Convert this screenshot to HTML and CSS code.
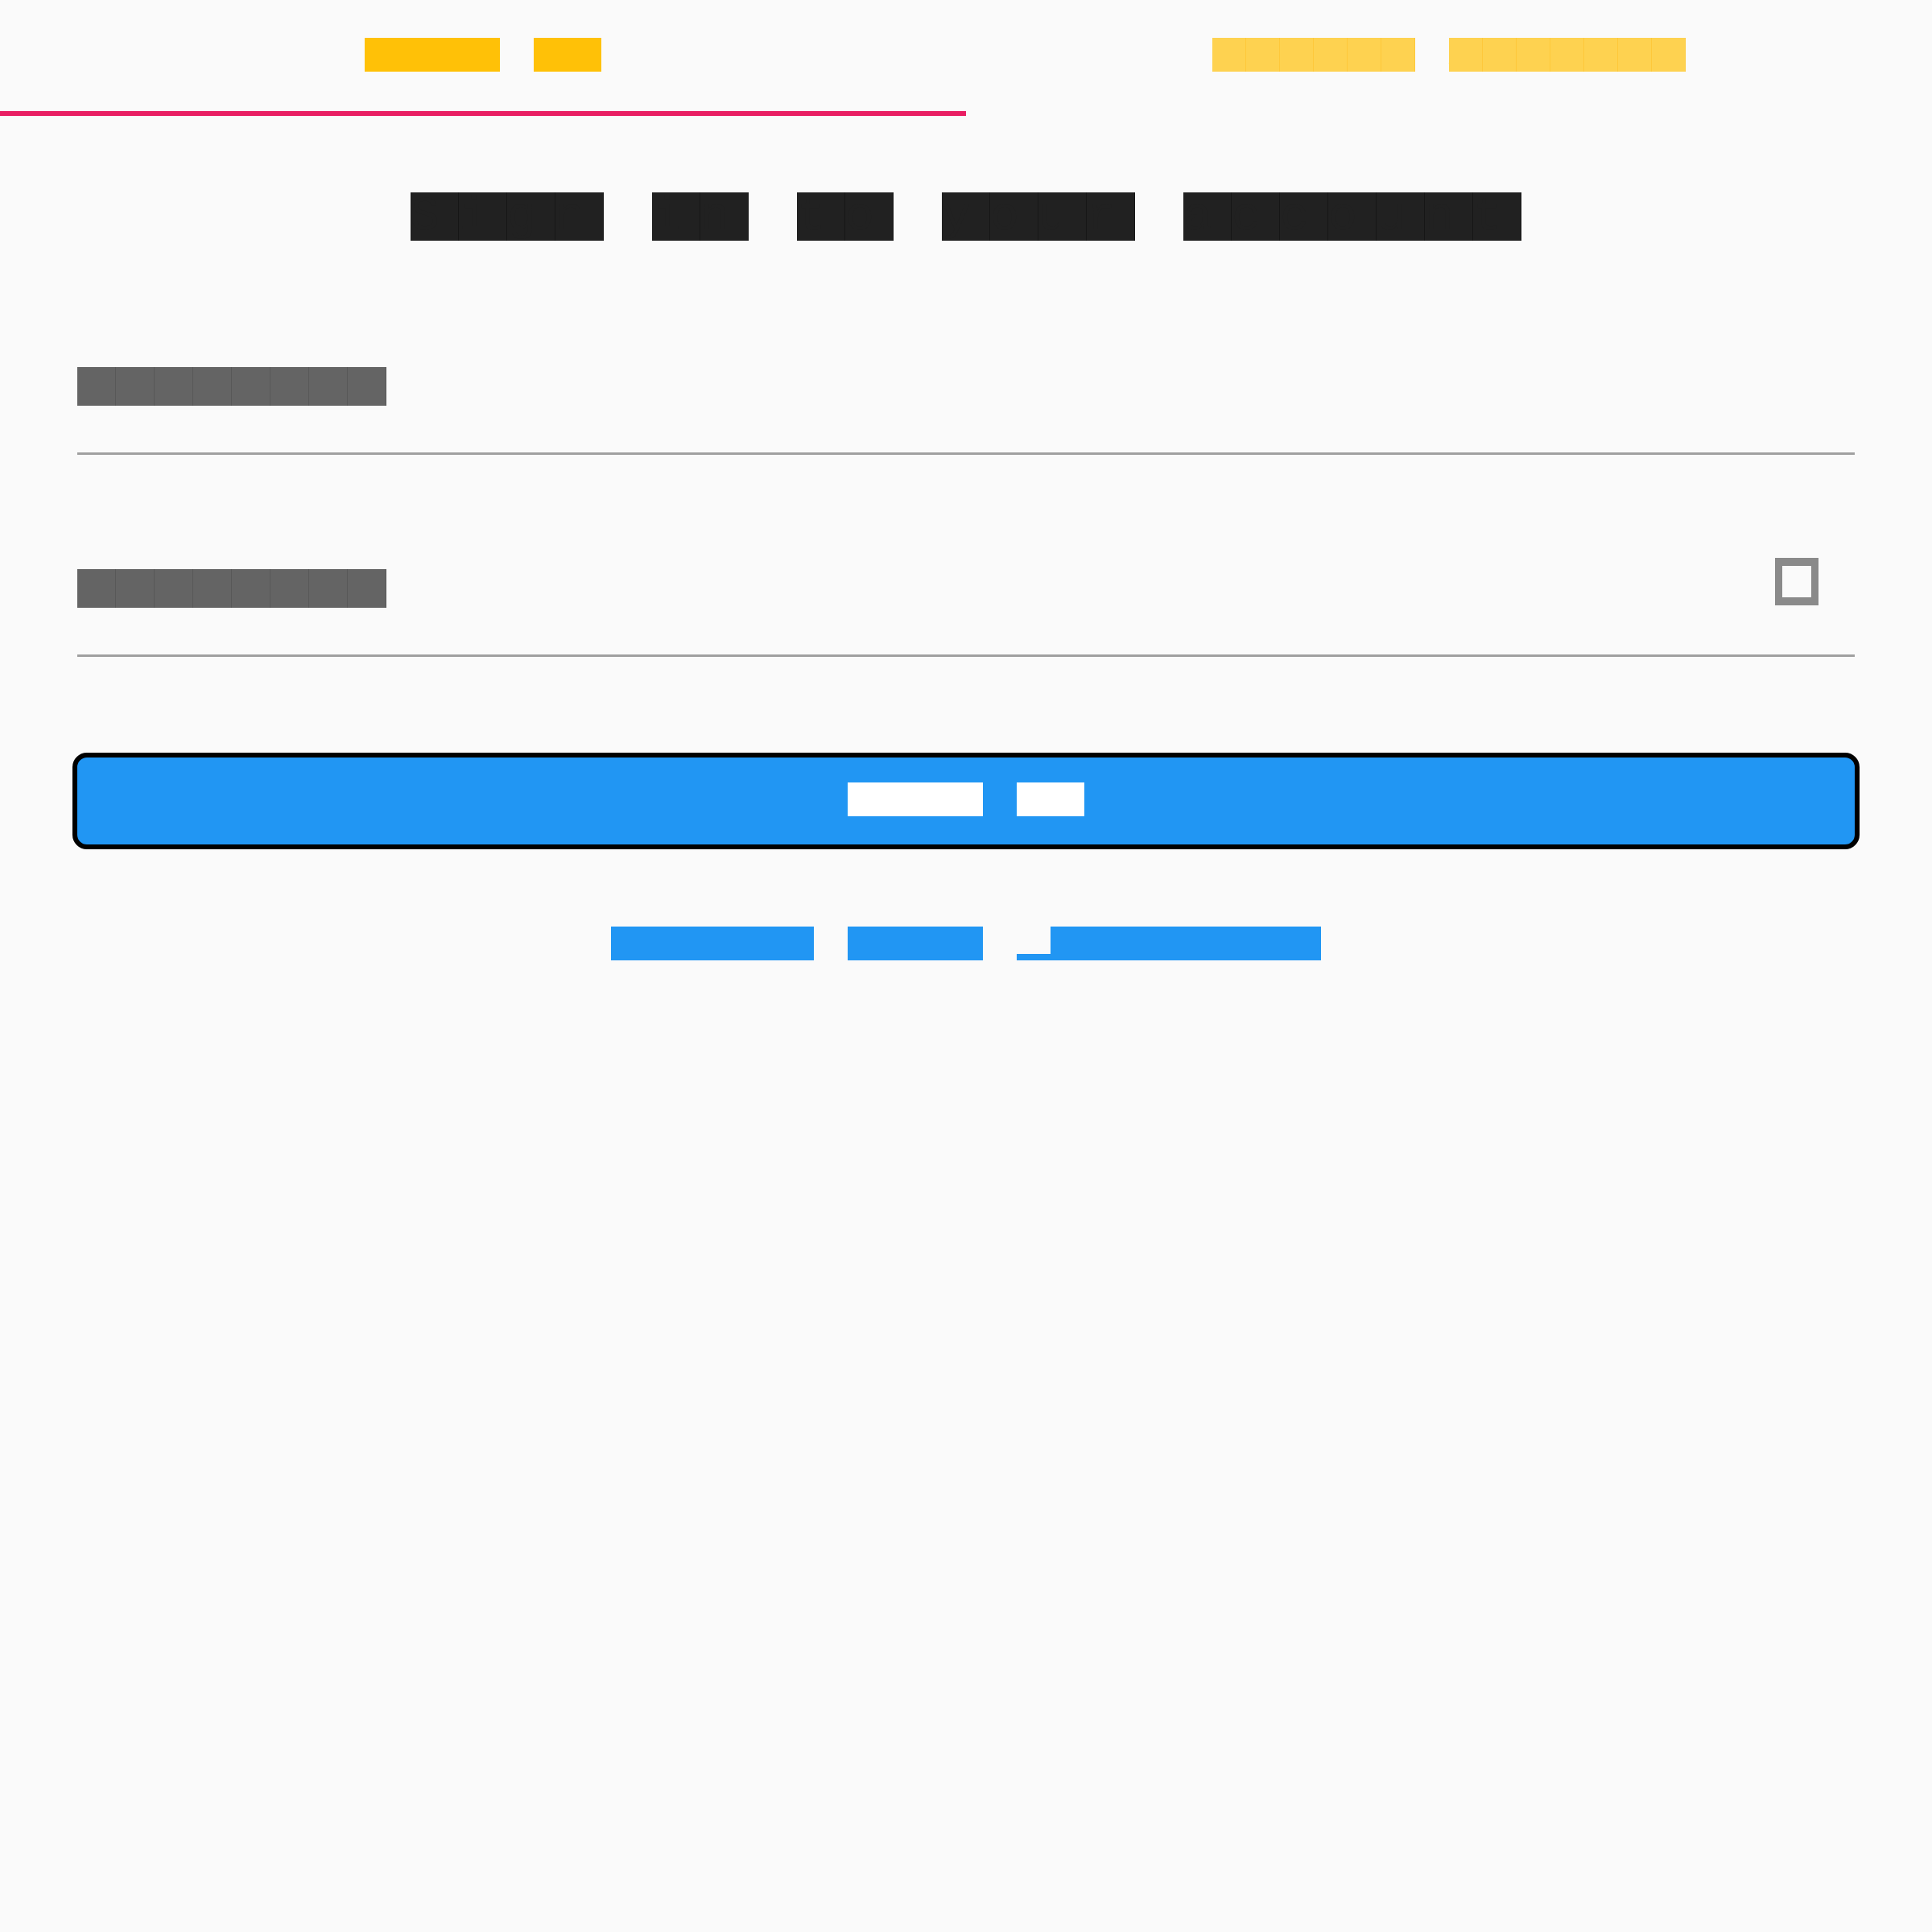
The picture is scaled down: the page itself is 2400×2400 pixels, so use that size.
FILE: index.html
```html
<!DOCTYPE html>
<html lang="en">
<head>
<meta charset="utf-8">
<title>Sign In</title>
<link rel="stylesheet" href="styles.css">
</head>
<body>
<div class="tabs">
  <div class="tab tab-active"><div class="tx t42 amber"><span class="w">Sign</span> <span class="w">In</span></div></div>
  <div class="tab"><div class="tx t42 amber-dim"><span class="w">Create</span> <span class="w">Account</span></div></div>
</div>

<div class="title tx t60 dark"><span class="w">Sign</span> <span class="w">in</span> <span class="w">to</span> <span class="w">your</span> <span class="w">account</span></div>

<div class="form">
  <div class="field field-first">
    <div class="row">
      <div class="tx t48 grey"><span class="w">Username</span></div>
    </div>
    <div class="underline"></div>
  </div>
  <div class="field field-second">
    <div class="row">
      <div class="tx t48 grey"><span class="w">Password</span></div>
      <div class="icon" aria-label="toggle visibility"></div>
    </div>
    <div class="underline"></div>
  </div>

  <div class="button">
    <div class="tx t42 white"><span class="w">Sign</span> <span class="w">In</span></div>
  </div>

  <div class="link tx t42 blue"><span class="w">Forgot</span> <span class="w">your</span> <span class="d">p</span><span class="w">assword?</span></div>
</div>
</body>
</html>
```

FILE: styles.css
```css
html, body {
  margin: 0;
  padding: 0;
  background: #fafafa;
}

body {
  width: 2400px;
  height: 2400px;
  font-family: "Liberation Mono", monospace;
}

.tx {
  font-family: "Liberation Mono", monospace;
  letter-spacing: 0.4em;
  line-height: 1;
  white-space: nowrap;
  height: 1em;
}

.t42 { font-size: 42px; }
.t48 { font-size: 48px; }
.t60 { font-size: 60px; }

.w, .d {
  display: inline-block;
  vertical-align: top;
  height: 1em;
  line-height: 1;
}

.w {
  background-color: var(--c);
  color: var(--c);
  background-image: repeating-linear-gradient(90deg,
    transparent 0, transparent calc(1em - 1px),
    var(--l) calc(1em - 1px), var(--l) 1em);
}

.d {
  color: transparent;
  background-image: linear-gradient(to bottom,
    transparent 0, transparent 0.81em,
    var(--c) 0.81em, var(--c) 1em);
}

.amber { --c: #ffc107; --l: #ffc107; }
.amber-dim { --c: #fed250; --l: #fec83a; }
.dark { --c: #212121; --l: #161616; }
.grey { --c: #646464; --l: #585858; }
.white { --c: #ffffff; --l: #ffffff; }
.blue { --c: #2196f3; --l: #2196f3; }

.tabs {
  display: flex;
  height: 144px;
}

.tab {
  flex: 1;
  box-sizing: border-box;
  height: 144px;
  padding-top: 47px;
  text-align: center;
}

.tab .tx {
  display: inline-block;
}

.tab-active {
  border-bottom: 6px solid #e91e63;
}

.title {
  margin-top: 95px;
  text-align: center;
}

.form {
  padding: 0 96px;
}

.field-first {
  margin-top: 157px;
}

.field-second {
  margin-top: 142px;
}

.row {
  display: flex;
  align-items: flex-start;
  height: 48px;
}

.underline {
  margin-top: 58px;
  height: 3px;
  background: #a0a0a0;
}

.icon {
  box-sizing: border-box;
  width: 54px;
  height: 59px;
  margin-left: auto;
  margin-right: 45px;
  margin-top: -14px;
  border-style: solid;
  border-color: #8a8a8a;
  border-width: 10px 9px;
}

.button {
  box-sizing: border-box;
  margin: 119px -6px 0;
  height: 120px;
  padding-top: 31px;
  border: 6px solid #000;
  border-radius: 18px;
  background: #2196f3;
  text-align: center;
}

.button .tx {
  display: inline-block;
}

.link {
  margin-top: 96px;
  text-align: center;
}
```
